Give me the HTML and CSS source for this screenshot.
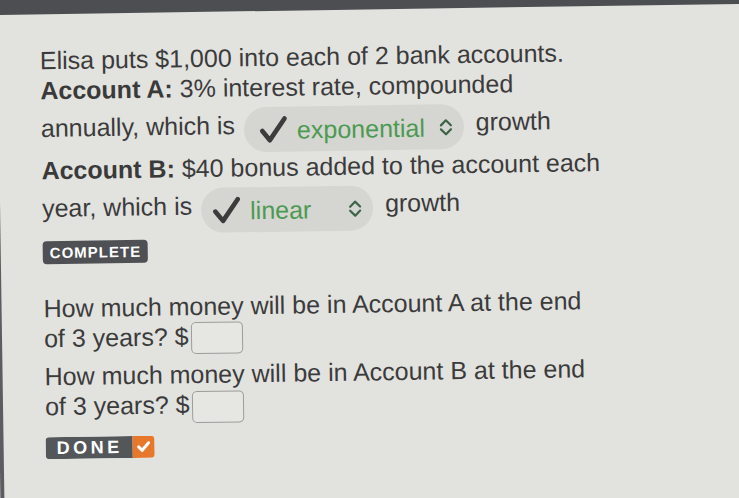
FILE: index.html
```html
<!DOCTYPE html>
<html>
  <head>
    <meta charset="UTF-8">
    <title>Bank Accounts</title>
    <link rel="stylesheet" href="styles.css">
  </head>
  <body>
    <div class="screen">
      <div class="topbar"></div>

      <div class="problem">
        <p class="lead">Elisa puts $1,000 into each of 2 bank accounts.</p>

        <p class="account">
          <b>Account A:</b> 3% interest rate, compounded<br>
          annually, which is
          <span class="pick">
            <svg class="tick" viewBox="0 0 32 30"><path d="M4 16 L12 26 L28 3"/></svg>
            <span class="pick-value">exponential</span>
            <svg class="chevron" viewBox="0 0 14 18"><path d="M2 7 L7 2 L12 7 M2 11 L7 16 L12 11"/></svg>
          </span>
          growth
        </p>

        <p class="account">
          <b>Account B:</b> $40 bonus added to the account each<br>
          year, which is
          <span class="pick pick-short">
            <svg class="tick" viewBox="0 0 32 30"><path d="M4 16 L12 26 L28 3"/></svg>
            <span class="pick-value">linear</span>
            <svg class="chevron" viewBox="0 0 14 18"><path d="M2 7 L7 2 L12 7 M2 11 L7 16 L12 11"/></svg>
          </span>
          growth
        </p>

        <span class="badge">COMPLETE</span>

        <p class="question">
          How much money will be in Account A at the end<br>
          of 3 years? $<input class="answer" type="text">
        </p>
        <p class="question">
          How much money will be in Account B at the end<br>
          of 3 years? $<input class="answer" type="text">
        </p>

        <button class="done">
          <span class="done-label">DONE</span>
          <span class="done-box">
            <svg viewBox="0 0 14 12"><path d="M2 6 L5.5 9.5 L12 2"/></svg>
          </span>
        </button>
      </div>
    </div>
  </body>
</html>
```

FILE: styles.css
```css
html,
body {
  overflow: hidden;
}

body {
  margin: 0;
  background: #e2e2df;
  color: #3b3b3b;
  font-family: "Liberation Sans", Arial, sans-serif;
  font-size: 25px;
  height: 498px;
}

/* the tablet sits at a slight tilt, its bezel peeking out on the left */
.screen {
  height: 498px;
  margin-left: -7px;
  border-left: 4px solid #5c5d60;
  transform: rotate(-0.85deg);
  transform-origin: left top;
}

.topbar {
  height: 15px;
  margin-right: -12px;
  background: #4d4e52;
}

.problem {
  padding: 31px 0 0 42px;
}

.problem p {
  margin: 0;
  line-height: 30px;
}

.account b {
  font-weight: bold;
  color: #3a3a3a;
}

/* select-like dropdown showing the chosen answer */
.pick {
  display: inline-flex;
  align-items: center;
  vertical-align: middle;
  height: 45px;
  margin: 5px 5px 0 2px;
  padding: 0 11px 0 14px;
  border-radius: 23px;
  background: #d5d5d2;
}

.pick-short {
  min-width: 151px;
  padding-left: 10px;
}

.tick {
  width: 31px;
  height: 28px;
  margin-right: 8px;
}

.tick path {
  fill: none;
  stroke: #3c3c3c;
  stroke-width: 5;
  stroke-linecap: round;
  stroke-linejoin: round;
}

.pick-value {
  flex: 1;
  color: #4c9a51;
}

.chevron {
  width: 14px;
  height: 18px;
  margin-left: 14px;
}

.chevron path {
  fill: none;
  stroke: #3d6446;
  stroke-width: 2.2;
  stroke-linecap: round;
  stroke-linejoin: round;
}

.badge {
  display: block;
  width: max-content;
  margin-top: 6px;
  padding: 0 7px;
  height: 23px;
  line-height: 23px;
  border-radius: 4px;
  background: #4e5053;
  color: #fff;
  font-size: 15px;
  font-weight: bold;
  letter-spacing: 1px;
}

.problem .question {
  margin-top: 5px;
}

.problem .badge + .question {
  margin-top: 29px;
}

.answer {
  width: 50px;
  height: 30px;
  margin-left: 2px;
  padding: 0;
  vertical-align: middle;
  border: 1.5px solid #9c9c9a;
  border-radius: 5px;
  background: #e6e6e3;
}

.done {
  display: flex;
  margin-top: 12px;
  padding: 0;
  border: none;
  border-radius: 4px;
  overflow: hidden;
  cursor: pointer;
  font-family: inherit;
}

.done-label {
  padding: 0 10px 0 11px;
  height: 22px;
  line-height: 22px;
  background: #54575a;
  color: #fff;
  font-size: 18px;
  font-weight: bold;
  letter-spacing: 3.5px;
}

.done-box {
  display: flex;
  align-items: center;
  justify-content: center;
  width: 22px;
  background: #e7782b;
}

.done-box svg {
  width: 14px;
  height: 12px;
}

.done-box path {
  fill: none;
  stroke: #fff;
  stroke-width: 3;
  stroke-linecap: round;
  stroke-linejoin: round;
}
```
